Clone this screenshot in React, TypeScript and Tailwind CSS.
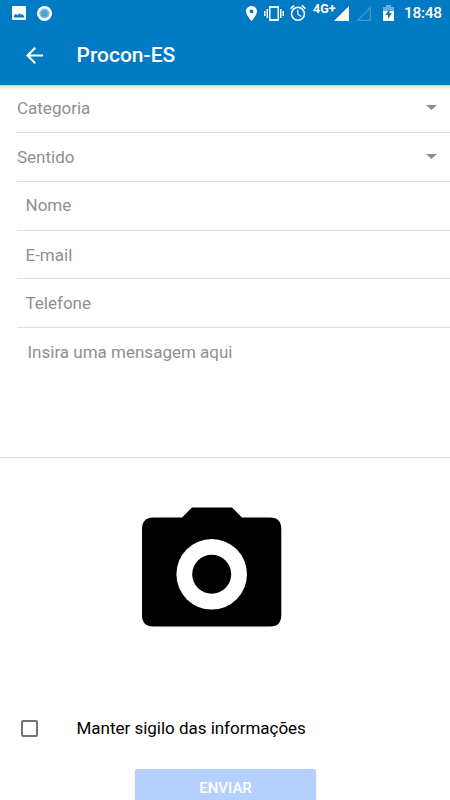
import React, { useState } from 'react';

const rule = 'h-[49px] border-b border-[#dedede]';

const fields = [
  { name: 'Nome', height: 'h-[49px] pb-[2px]' },
  { name: 'E-mail', height: 'h-[48px]' },
  { name: 'Telefone', height: 'h-[49px]' },
];

function StatusBar() {
  return (
    <div className="flex h-[26px] items-center text-white">
      <svg className="ml-3 h-[14px] w-[14px]" viewBox="0 0 14 14">
        <rect width="14" height="14" rx="1" fill="#fff" />
        <path d="M2 11.500V9.500L4 7.800L5.500 9.500L7.300 7L8.800 9L10 8L12 10V11.500Z" fill="#007ac2" />
      </svg>
      <svg className="ml-[11px] h-[15px] w-[15px]" viewBox="0 0 15 15">
        <circle cx="7.5" cy="7.5" r="7.5" fill="#fff" />
        <circle cx="7.5" cy="7.5" r="5" fill="#75b8e2" />
        <circle cx="7.5" cy="7.5" r="3.2" fill="#4ba1d7" />
      </svg>
      <svg className="ml-[194px] h-[15px] w-[11px]" viewBox="5 2 14 20" preserveAspectRatio="none">
        <path fill="#fff" d="M12 2C8.13 2 5 5.13 5 9c0 5.25 7 13 7 13s7-7.75 7-13c0-3.87-3.13-7-7-7zm0 9.5a2.5 2.5 0 1 1 0-5 2.5 2.5 0 0 1 0 5z" />
      </svg>
      <svg className="ml-[7px] h-[15px] w-5" viewBox="0 0 20 15">
        <g fill="#fff">
          <path fillRule="evenodd" d="M6 0h8a1 1 0 0 1 1 1v13a1 1 0 0 1-1 1H6a1 1 0 0 1-1-1V1a1 1 0 0 1 1-1zm.5 2v11h7V2z" />
          <path d="M2.5 3H4v9H2.5zM16 3h1.500v9H16zM0 5h1.500v5H0zM18.500 5H20v5h-1.500z" />
        </g>
      </svg>
      <svg className="ml-[6px] h-4 w-4" viewBox="2 2 20 20">
        <path fill="#fff" d="M22 5.720l-4.600-3.860-1.290 1.530 4.600 3.860L22 5.720zM7.880 3.390L6.600 1.860 2 5.710l1.290 1.530 4.590-3.850zM12.500 8H11v6l4.750 2.850.75-1.230-4-2.370V8zM12 4c-4.970 0-9 4.030-9 9s4.020 9 9 9a9 9 0 0 0 0-18zm0 16c-3.870 0-7-3.130-7-7s3.130-7 7-7 7 3.130 7 7-3.130 7-7 7z" />
      </svg>
      <span className="mb-2 ml-[7px] w-[21px] text-[12.5px] leading-none font-bold">4G+</span>
      <svg className="h-[15px] w-[15px]" viewBox="0 0 15 15">
        <path d="M15 0V15H0Z" fill="#fff" />
      </svg>
      <svg className="ml-[7px] h-[15px] w-[15px]" viewBox="0 0 15 15">
        <path d="M14.300 1.700V14.300H1.700Z" fill="none" stroke="#409bd3" strokeWidth="1.300" />
      </svg>
      <svg className="ml-[12px] h-4 w-[11px]" viewBox="0 0 11 16">
        <path d="M0 2H3V0H8V2H11V6H0Z" fill="#66b0dd" />
        <path d="M0 6H11V16H0Z" fill="#fff" />
        <path d="M6.500 4L2.300 10H5V14L9 8.200H6.500Z" fill="#007ac2" />
      </svg>
      <span className="mt-[2px] ml-[10px] text-[15.500px] leading-none font-medium tracking-[-0.3px]">18:48</span>
    </div>
  );
}

function SelectRow({ label }: { label: string }) {
  return (
    <div className={`${rule} flex items-center justify-between pr-[13px]`}>
      <span className="pt-[1px]">{label}</span>
      <svg className="mb-[1px] h-[5px] w-[11px]" viewBox="0 0 11 5">
        <path d="M0 0H11L5.500 5Z" fill="#8e8e8e" />
      </svg>
    </div>
  );
}

export default function App() {
  const [hidden, setHidden] = useState(false);

  return (
    <div className="flex h-[800px] w-[450px] flex-col overflow-hidden bg-white font-[Roboto,sans-serif]">
      <header className="h-[85px] shrink-0 bg-[#007ac2] text-white">
        <StatusBar />
        <div className="flex h-[59px] items-center pl-[26px]">
          <svg className="h-[17px] w-[17px]" viewBox="4 4 16 16">
            <path fill="#fff" d="M20 11H7.830l5.590-5.590L12 4l-8 8 8 8 1.410-1.410L7.830 13H20v-2z" />
          </svg>
          <h1 className="ml-[33.500px] text-[21px] font-medium">Procon-ES</h1>
        </div>
      </header>
      <div className="h-[4px] shrink-0 bg-gradient-to-b from-[#d6d3ce] to-white" />

      <form className="text-[17px] text-[#8f8f8f]">
        <div className="-mt-[5px] pl-[17px]">
          <SelectRow label="Categoria" />
          <SelectRow label="Sentido" />
          {fields.map(({ name, height }) => (
            <input
              key={name}
              placeholder={name}
              className={`${height} block w-full border-b border-[#dedede] pl-[8.500px] outline-none placeholder:text-[#8f8f8f]`}
            />
          ))}
        </div>
        <textarea
          placeholder="Insira uma mensagem aqui"
          className="block h-[130px] w-full resize-none border-b border-[#d8d8d8] pt-3 pl-[27.500px] outline-none placeholder:text-[#8f8f8f]"
        />

        <svg className="mt-[49px] ml-[142px] h-[120px] w-[140px]" viewBox="0 0 140 120">
          <path d="M50 .5H90L100 10.500H128Q139.300 10.500 139.300 22V108Q139.300 119.500 128 119.500H11.500Q0 119.500 0 108V22Q0 10.500 11.500 10.500H40Z" />
          <circle cx="69.700" cy="67.300" r="35.300" fill="#fff" />
          <circle cx="69.700" cy="67.300" r="19.500" />
        </svg>

        <label className="mt-[86px] flex h-[30px] items-center pl-[21px] text-black">
          <input
            type="checkbox"
            checked={hidden}
            onChange={() => setHidden(!hidden)}
            className="h-[17px] w-[17px] appearance-none rounded-[2px] border-2 border-[#737373] checked:bg-[#737373]"
          />
          <span className="ml-[38.500px] pt-[2px] tracking-[-0.02px]">Manter sigilo das informações</span>
        </label>

        <button
          type="button"
          className="mt-[26px] ml-[135px] block h-[37px] w-[181px] rounded-[2px] bg-[#b5d0ff] pt-[2px] text-[15px] font-medium text-white shadow-sm"
        >
          ENVIAR
        </button>
      </form>
    </div>
  );
}
